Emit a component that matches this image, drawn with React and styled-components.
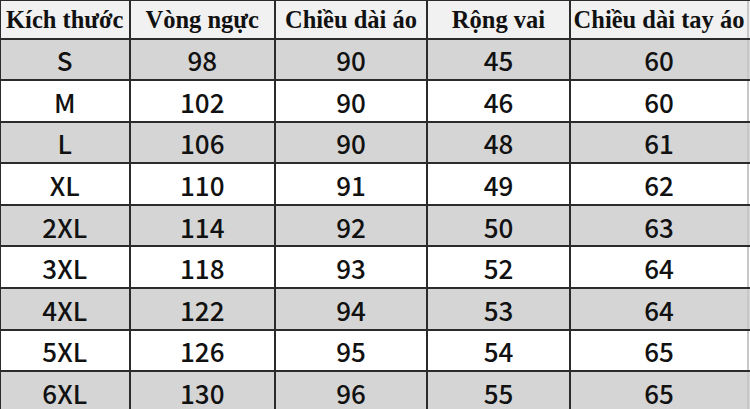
import React from "react";
import styled, { createGlobalStyle } from "styled-components";

const GlobalStyle = createGlobalStyle`
  html, body {
    margin: 0;
    padding: 0;
    background: #ffffff;
  }
`;

const COLUMNS = "130.5px 145.5px 152px 143px 178px";

const Table = styled.div`
  width: 750px;
  height: 409px;
  overflow: hidden;
  border-top: 1px solid #2b2b2b;
  box-sizing: border-box;
`;

const Row = styled.div`
  display: grid;
  grid-template-columns: ${COLUMNS};
  height: ${(p) => (p.$header ? "38.5px" : "41.6px")};
  box-sizing: border-box;
  border-bottom: 2px solid #2b2b2b;
  background: ${(p) => (p.$header ? "#f1f1f1" : p.$shaded ? "#d5d5d5" : "#ffffff")};
`;

const Cell = styled.div`
  display: flex;
  align-items: center;
  justify-content: center;
  box-sizing: border-box;
  border-right: 2px solid ${(p) => (p.$last ? "#c8c8c8" : "#2b2b2b")};
  border-left: ${(p) => (p.$first ? "1.5px solid #2b2b2b" : "none")};
  color: #111111;
  white-space: nowrap;
`;

const HeadCell = styled(Cell)`
  font-family: "Liberation Serif", "Times New Roman", serif;
  font-weight: bold;
  font-size: 24.5px;
  padding-top: 1px;
`;

const DataCell = styled(Cell)`
  font-family: "Noto Sans CJK SC", "Noto Sans", sans-serif;
  font-weight: 500;
  font-size: 26px;
  line-height: 1;
  padding-top: 2px;
`;

const headers = ["Kích thước", "Vòng ngực", "Chiều dài áo", "Rộng vai", "Chiều dài tay áo"];

const rows = [
  ["S", 98, 90, 45, 60],
  ["M", 102, 90, 46, 60],
  ["L", 106, 90, 48, 61],
  ["XL", 110, 91, 49, 62],
  ["2XL", 114, 92, 50, 63],
  ["3XL", 118, 93, 52, 64],
  ["4XL", 122, 94, 53, 64],
  ["5XL", 126, 95, 54, 65],
  ["6XL", 130, 96, 55, 65],
];

export default function App() {
  return (
    <>
      <GlobalStyle />
      <Table>
        <Row $header>
          {headers.map((h, i) => (
            <HeadCell key={h} $first={i === 0} $last={i === headers.length - 1}>
              {h}
            </HeadCell>
          ))}
        </Row>
        {rows.map((r, ri) => (
          <Row key={r[0]} $shaded={ri % 2 === 0}>
            {r.map((v, i) => (
              <DataCell key={i} $first={i === 0} $last={i === r.length - 1}>
                {v}
              </DataCell>
            ))}
          </Row>
        ))}
      </Table>
    </>
  );
}
